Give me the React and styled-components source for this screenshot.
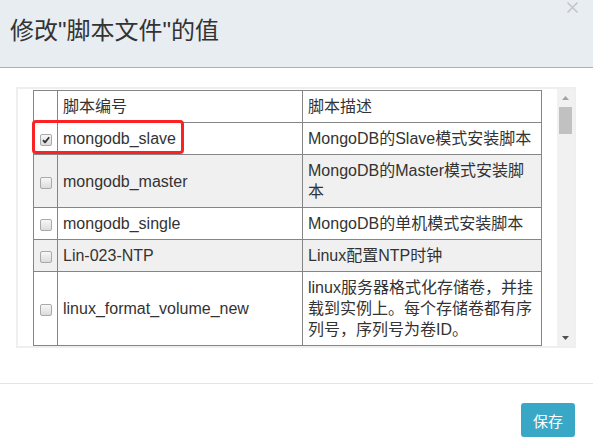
import React from 'react';
import styled, {createGlobalStyle} from 'styled-components';

const GlobalStyle = createGlobalStyle`
    html, body {
        margin: 0;
        padding: 0;
        background: #fff;
    }
    body {
        font-family: "Liberation Sans", "Noto Sans CJK SC", sans-serif;
        color: #333;
    }
`;

const Modal = styled.div`
    width: 593px;
    height: 444px;
    background: #fff;
    overflow: hidden;
`;

const Header = styled.div`
    position: relative;
    height: 68px;
    box-sizing: border-box;
    padding: 14px 10px 0 10px;
    background: #e8edf1;
    border-bottom: 1px solid #a7b2bc;
`;

const Title = styled.h4`
    margin: 0;
    font-weight: normal;
    font-size: 24px;
    line-height: 34px;
    color: #333;
`;

const Close = styled.button`
    position: absolute;
    top: 1px;
    right: 14px;
    width: 13px;
    height: 13px;
    padding: 0;
    border: 0;
    background: transparent;
    cursor: pointer;
    svg {
        display: block;
    }
`;

const Body = styled.div`
    padding: 19px 17px 35px 16px;
`;

const Frame = styled.div`
    display: flex;
    height: 261px;
    box-sizing: border-box;
    border: 2px solid #efefef;
`;

const ScrollArea = styled.div`
    position: relative;
    flex: 1;
    overflow: hidden;
    padding: 1px 0 0 15px;
`;

const Table = styled.table`
    width: 509px;
    box-sizing: border-box;
    table-layout: fixed;
    border-collapse: separate;
    border-spacing: 0;
    border-left: 1px solid #858585;
    border-top: 1px solid #858585;
    font-size: 16px;
    line-height: 21px;
`;

const Cell = styled.td`
    box-sizing: border-box;
    width: ${p => p.w}px;
    padding: 5px 5px 5px 5px;
    border-right: 1px solid #858585;
    border-bottom: 1px solid #858585;
    vertical-align: middle;
    text-align: left;
    font-weight: normal;
    word-break: break-all;
`;

const Row = styled.tr`
    background: ${p => p.striped ? '#f0f0f0' : '#fff'};
`;

const CheckBox = styled.span`
    display: block;
    width: 12px;
    height: 12px;
    margin: 3px auto 0;
    box-sizing: border-box;
    border: 1px solid #a9a9a9;
    border-radius: 2px;
    background: linear-gradient(#f7f7f7, #dcdcdc);
    svg {
        display: block;
    }
`;

const Highlight = styled.div`
    position: absolute;
    left: 14px;
    top: 31px;
    width: 152px;
    height: 34px;
    box-sizing: border-box;
    border: 3px solid #fa2222;
    border-radius: 4px;
    pointer-events: none;
`;

const ScrollBar = styled.div`
    width: 17px;
    display: flex;
    flex-direction: column;
    background: #f1f1f1;
`;

const Arrow = styled.div`
    height: 17px;
    display: flex;
    align-items: center;
    justify-content: center;
    padding-top: ${p => p.up ? '0' : '0'};
`;

const Track = styled.div`
    flex: 1;
    padding: 1px 2px 0 2px;
`;

const Thumb = styled.div`
    height: 27px;
    background: #c1c1c1;
`;

const Footer = styled.div`
    display: flex;
    justify-content: flex-end;
    border-top: 1px solid #e5e5e5;
    padding: 19px 18px 0 0;
`;

const SaveButton = styled.button`
    height: 34px;
    padding: 0 12px;
    border: 0;
    border-radius: 3px;
    background: #39a8c6;
    color: #fff;
    font-family: "Liberation Sans", "Noto Sans CJK SC", sans-serif;
    font-size: 15px;
    cursor: pointer;
`;

const rows = [
    {id: 'mongodb_slave', desc: 'MongoDB的Slave模式安装脚本', checked: true},
    {id: 'mongodb_master', desc: 'MongoDB的Master模式安装脚本'},
    {id: 'mongodb_single', desc: 'MongoDB的单机模式安装脚本'},
    {id: 'Lin-023-NTP', desc: 'Linux配置NTP时钟'},
    {id: 'linux_format_volume_new', desc: 'linux服务器格式化存储卷，并挂载到实例上。每个存储卷都有序列号，序列号为卷ID。'},
];

const Check = ({checked}) => (
    <CheckBox>
        {checked && (
            <svg width="10" height="10" viewBox="0 0 10 10">
                <path d="M2 5.2 L4 7.4 L8.2 2.2" fill="none" stroke="#333" strokeWidth="1.8" strokeLinejoin="round" />
            </svg>
        )}
    </CheckBox>
);

export default function App() {
    return (
        <Modal>
            <GlobalStyle />
            <Header>
                <Title>修改"脚本文件"的值</Title>
                <Close aria-label="close">
                    <svg width="13" height="13" viewBox="0 0 13 13">
                        <path d="M1.5 1.5 L11.5 11.5 M11.5 1.5 L1.5 11.5" stroke="#c3c6c9" strokeWidth="1.6" />
                    </svg>
                </Close>
            </Header>
            <Body>
                <Frame>
                    <ScrollArea>
                        <Table>
                            <thead>
                                <Row>
                                    <Cell as="th" w={24}></Cell>
                                    <Cell as="th" w={245}>脚本编号</Cell>
                                    <Cell as="th" w={239}>脚本描述</Cell>
                                </Row>
                            </thead>
                            <tbody>
                                {rows.map((r, i) => (
                                    <Row key={r.id} striped={i % 2 === 1}>
                                        <Cell w={24}><Check checked={r.checked} /></Cell>
                                        <Cell w={245}>{r.id}</Cell>
                                        <Cell w={239}>{r.desc}</Cell>
                                    </Row>
                                ))}
                            </tbody>
                        </Table>
                        <Highlight />
                    </ScrollArea>
                    <ScrollBar>
                        <Arrow>
                            <svg width="7" height="4" viewBox="0 0 7 4"><path d="M0 4 L3.5 0 L7 4 Z" fill="#a3a3a3" /></svg>
                        </Arrow>
                        <Track><Thumb /></Track>
                        <Arrow>
                            <svg width="7" height="4" viewBox="0 0 7 4"><path d="M0 0 L7 0 L3.5 4 Z" fill="#505050" /></svg>
                        </Arrow>
                    </ScrollBar>
                </Frame>
            </Body>
            <Footer>
                <SaveButton>保存</SaveButton>
            </Footer>
        </Modal>
    );
}
